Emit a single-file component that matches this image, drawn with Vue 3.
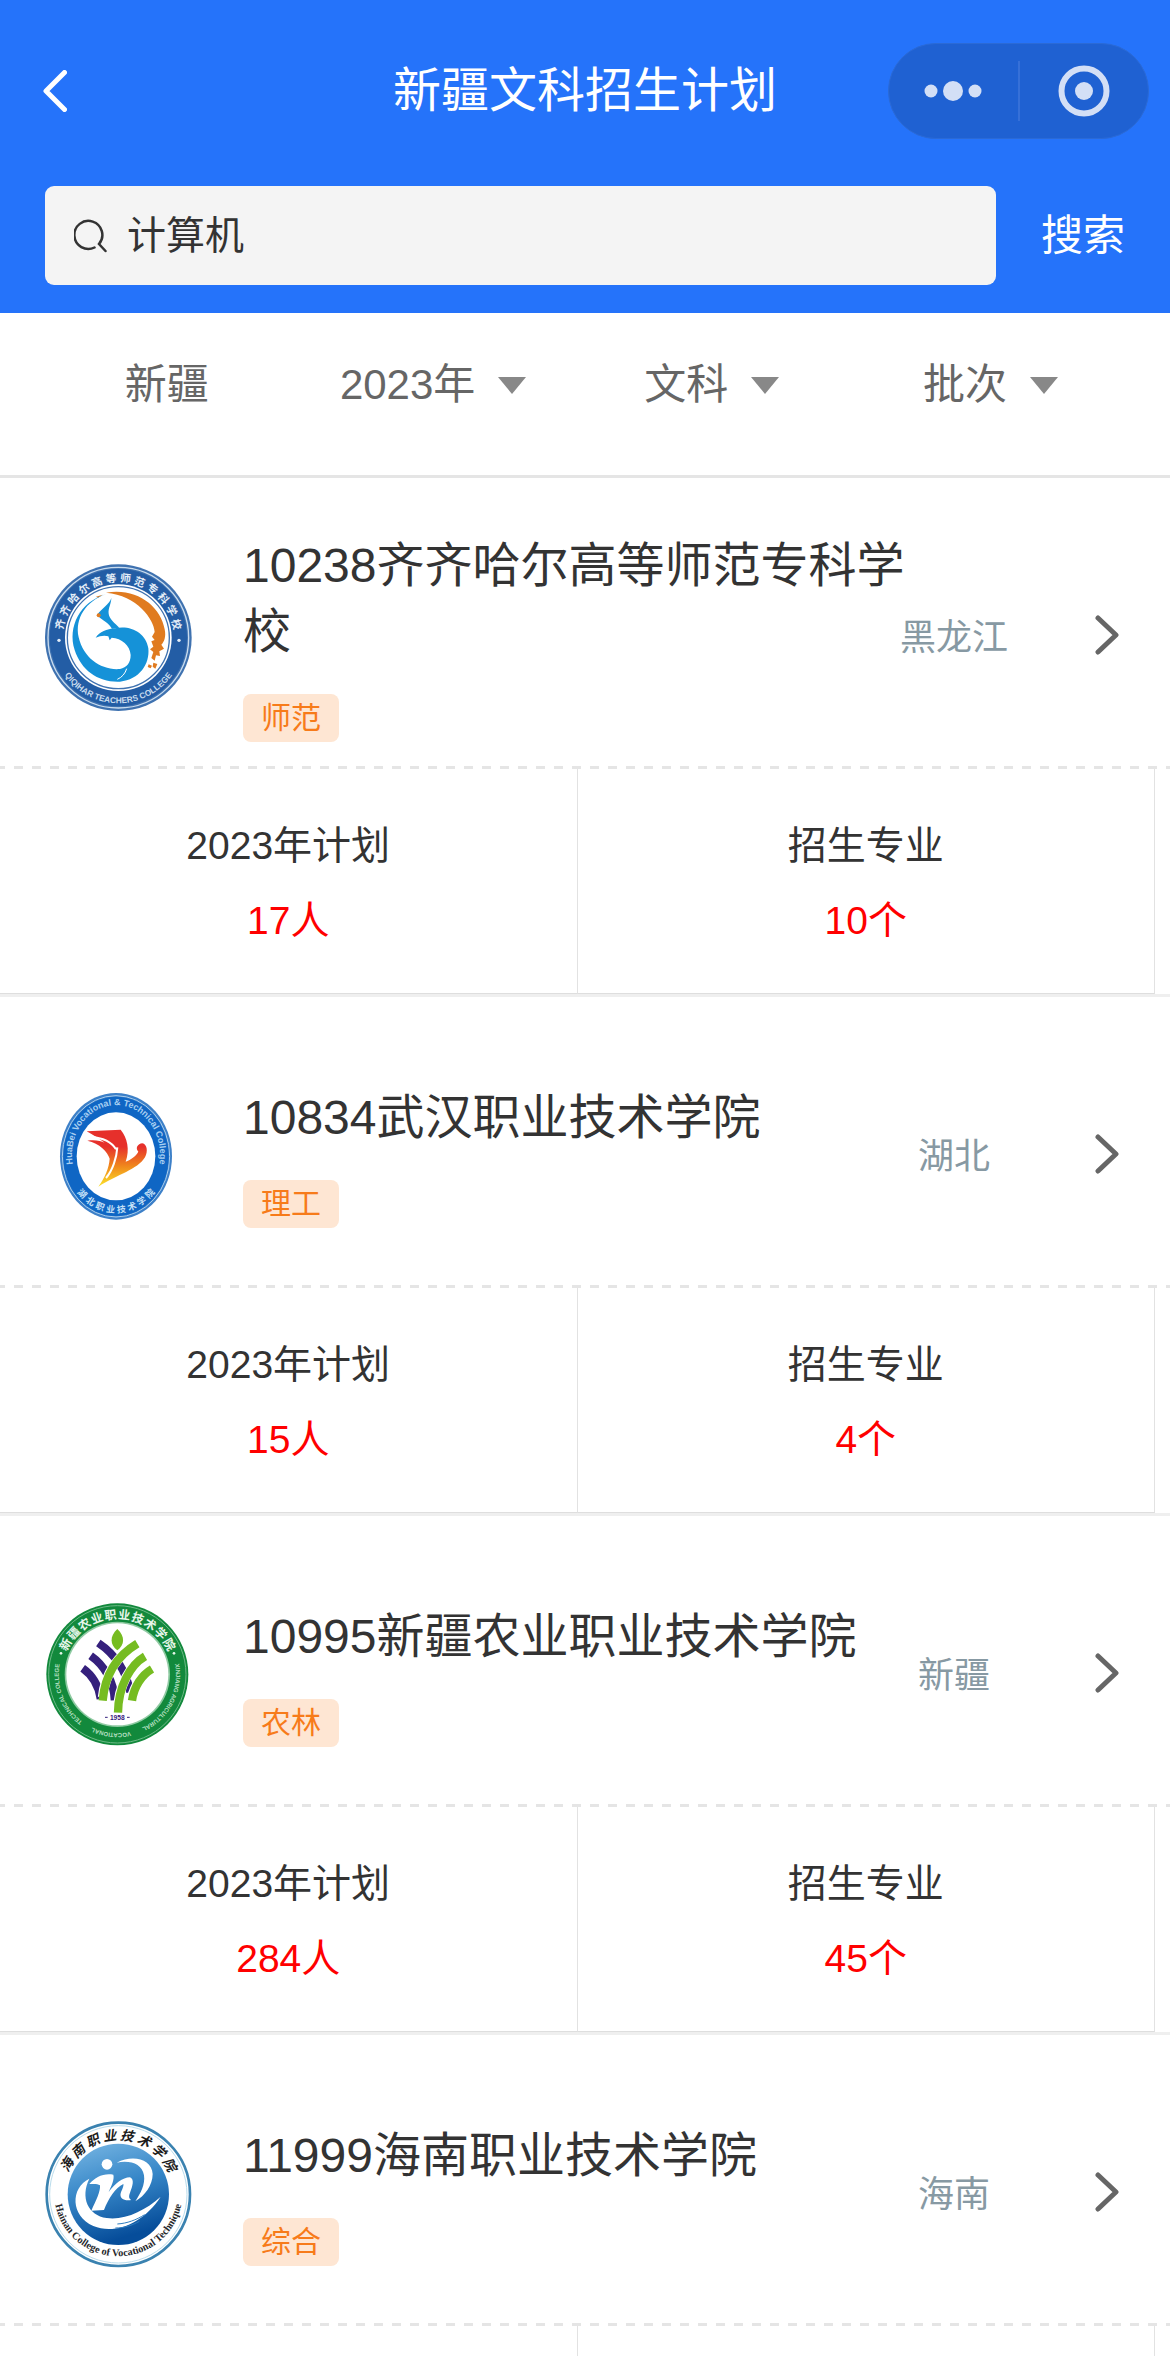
<!--
  招生计划列表页
  顶部导航 + 搜索框 + 筛选栏 + 院校列表
-->
<script setup>
import { ref } from 'vue'

const keyword = ref('计算机')

// 筛选项
const filters = ref([
  { key: 'year', label: '年份', value: '2023年', options: ['2023年'] },
  { key: 'subject', label: '科类', value: '文科', options: ['文科'] },
  { key: 'batch', label: '录取批次', value: '批次', options: ['批次'] }
])

const schools = [
  {
    code: '10238', name: '齐齐哈尔高等师范专科学校', tag: '师范', area: '黑龙江', logo: 'qiqihar',
    stats: [{ label: '2023年计划', value: '17人' }, { label: '招生专业', value: '10个' }]
  },
  {
    code: '10834', name: '武汉职业技术学院', tag: '理工', area: '湖北', logo: 'wuhan',
    stats: [{ label: '2023年计划', value: '15人' }, { label: '招生专业', value: '4个' }]
  },
  {
    code: '10995', name: '新疆农业职业技术学院', tag: '农林', area: '新疆', logo: 'xinjiang',
    stats: [{ label: '2023年计划', value: '284人' }, { label: '招生专业', value: '45个' }]
  },
  { code: '11999', name: '海南职业技术学院', tag: '综合', area: '海南', logo: 'hainan', stats: [{}, {}] }
]

/**
 * 校徽环形文字：把每个字均匀放到圆弧上
 * 角度以 12 点钟方向为 0，顺时针为正；flip 用于下半圈正向文字
 */
function arcChars(text, cx, cy, rx, ry, from, to, flip = false) {
  const chars = [...text]
  return chars.map((ch, i) => {
    const deg = from + ((to - from) * i) / (chars.length - 1)
    const rad = (deg * Math.PI) / 180
    const x = cx + rx * Math.sin(rad)
    const y = cy - ry * Math.cos(rad)
    return { ch, transform: `translate(${x} ${y}) rotate(${flip ? deg - 180 : deg})` }
  })
}

const qiqiharRing = arcChars('齐齐哈尔高等师范专科学校', 265, 263, 181, 181, -77, 77)
const wuhanRing = arcChars('湖北职业技术学院', 258, 260, 140, 158, 226, 134, true)
const xinjiangRing = arcChars('新疆农业职业技术学院', 262, 253, 183, 183, -60, 60)
const hainanRing = arcChars('海南职业技术学院', 265, 283, 180, 180, -60, 60)
</script>

<template>
  <div class="page">
    <header class="header">
      <div class="nav">
        <button class="nav-back" type="button" aria-label="返回">
          <svg viewBox="0 0 24 42" class="back-icon">
            <path d="M21.500 2.500 3 21l18.500 18.500" />
          </svg>
        </button>
        <h1 class="nav-title">新疆文科招生计划</h1>
        <div class="capsule">
          <button class="capsule-btn" type="button" aria-label="更多">
            <svg viewBox="0 0 58 22" class="dots-icon">
              <circle cx="7" cy="11" r="6.500" />
              <circle cx="29" cy="11" r="10" />
              <circle cx="51" cy="11" r="6.500" />
            </svg>
          </button>
          <button class="capsule-btn" type="button" aria-label="关闭">
            <svg viewBox="0 0 52 52" class="target-icon">
              <circle cx="26" cy="26" r="22.500" class="target-ring" />
              <circle cx="26" cy="26" r="9" />
            </svg>
          </button>
        </div>
      </div>
      <form class="search" @submit.prevent>
        <label class="search-box">
          <svg viewBox="0 0 34 34" class="search-icon">
            <path d="M20.500 28.500A14 14 0 1 1 25 25L31.500 32" />
          </svg>
          <input v-model="keyword" class="search-input" type="text" aria-label="搜索专业" />
        </label>
        <button class="search-btn" type="submit">搜索</button>
      </form>
    </header>

    <div class="filters">
      <div class="filter">新疆</div>
      <label v-for="f in filters" :key="f.key" class="filter">
        <select v-model="f.value" class="filter-select" :aria-label="f.label">
          <option v-for="o in f.options" :key="o">{{ o }}</option>
        </select>
        <svg viewBox="0 0 28 17" class="filter-arrow"><path d="M0 0h28L14 17z" /></svg>
      </label>
    </div>

    <main class="list">
      <article v-for="s in schools" :key="s.code" class="school">
        <div class="school-head">
          <!-- 齐齐哈尔高等师范专科学校 -->
          <svg v-if="s.logo === 'qiqihar'" class="logo" viewBox="45 42 441 441">
            <defs>
              <path id="qq-bottom" d="M90 352A196 196 0 0 0 440 352" />
            </defs>
            <circle cx="265" cy="263" r="220" fill="#3f72b0" />
            <circle cx="265" cy="263" r="211" fill="none" stroke="#c9dcee" stroke-width="4" />
            <circle cx="265" cy="263" r="206" fill="#235da5" />
            <circle cx="265" cy="263" r="160" fill="#fff" />
            <circle cx="265" cy="263" r="153" fill="none" stroke="#3f72b0" stroke-width="4" />
            <g class="ring-cn" fill="#e4eef8" font-size="32">
              <text v-for="(c, i) in qiqiharRing" :key="i" :transform="c.transform">{{ c.ch }}</text>
            </g>
            <circle cx="87" cy="271" r="5" fill="#e4eef8" />
            <circle cx="447" cy="271" r="5" fill="#e4eef8" />
            <text class="ring-en" fill="#c9dcee" font-size="25">
              <textPath href="#qq-bottom" startOffset="50%" text-anchor="middle">QIQIHAR TEACHERS COLLEGE</textPath>
            </text>
            <path
              fill="#e07b20"
              d="M228 128C320 112 392 168 404 238c5 22-2 40-10 46l8 12-14 8 2 14-12-2-4 16-10-8 6-18-10-8 10-8-6-16 10-4-8-10 8-14C372 208 322 136 228 128z"
            />
            <path fill="#e07b20" d="M356 343l10 4-4 8-9-4zM370 338l12 4-6 14-8-6zM198 140l20-6-14 9z" />
            <path
              fill="#1592d8"
              d="M228 132C150 156 112 230 134 300c20 62 72 98 136 95 58-6 90-52 85-100-7-46-52-70-100-60-25 2-46 11-58 28 12-5 26-8 38-4l4 12 6-8c30 2 55 22 57 52 0 24-12 38-32 42C215 362 160 325 146 262c-12-58 22-108 82-130z"
            />
            <path
              fill="#1592d8"
              d="M244 144c-6 20-30 32-42 50 6 14 30 18 44 42l22-3c-14-14-30-26-32-42-2-16 8-30 8-47z"
            />
            <circle cx="206" cy="196" r="6" fill="#e07b20" />
            <path fill="none" stroke="#fff" stroke-width="3" d="M262 388c14-6 24-18 28-32" />
          </svg>

          <!-- 武汉职业技术学院 -->
          <svg v-else-if="s.logo === 'wuhan'" class="logo" viewBox="45 39 441 441">
            <defs>
              <path id="wh-top" d="M130 292A132 150 0 1 1 386 292" />
              <linearGradient id="wh-flame" x1="0" y1="0" x2="0" y2="1">
                <stop offset="0.300" stop-color="#e6302b" />
                <stop offset="0.650" stop-color="#f08a1c" />
                <stop offset="1" stop-color="#fbe22a" />
              </linearGradient>
            </defs>
            <ellipse cx="258" cy="259" rx="168" ry="190" fill="#3d80c8" />
            <ellipse cx="258" cy="259" rx="161" ry="182" fill="none" stroke="#a9cdec" stroke-width="3" />
            <ellipse cx="258" cy="259" rx="158" ry="179" fill="#0f66c4" />
            <ellipse cx="258" cy="259" rx="118" ry="132" fill="#fff" />
            <text class="ring-en" fill="#a9d0f2" font-size="27">
              <textPath href="#wh-top" startOffset="50%" text-anchor="middle">HuaBei Vocational &amp; Technical College</textPath>
            </text>
            <g class="ring-cn" fill="#c4e0f7" font-size="27">
              <text v-for="(c, i) in wuhanRing" :key="i" :transform="c.transform">{{ c.ch }}</text>
            </g>
            <path
              fill="url(#wh-flame)"
              d="M170 184l102-5c20 24 28 60 15 96 16-6 32-18 38-30-10-10-2-24 12-25 14 2 18 24 8 42-24 38-80 50-140 88 20-28 32-56 34-84-6-20-30-46-67-54 22-3 40 0 52 6-18-14-34-22-54-34z"
            />
            <path fill="none" stroke="#fff" stroke-width="6" d="M180 200c50 4 68 20 78 38M262 232c-2 30-14 70-34 92" />
          </svg>

          <!-- 新疆农业职业技术学院 -->
          <svg v-else-if="s.logo === 'xinjiang'" class="logo" viewBox="45 36 441 441">
            <defs>
              <path id="xj-bottom" d="M434 216A176 176 0 1 1 90 216" />
            </defs>
            <circle cx="262" cy="253" r="213" fill="#12893c" />
            <circle cx="262" cy="253" r="206" fill="none" stroke="#6cba86" stroke-width="3" />
            <circle cx="262" cy="253" r="158" fill="#8fcaa2" />
            <circle cx="262" cy="253" r="153" fill="#fff" />
            <g class="ring-cn" fill="#e6f6ea" font-size="36">
              <text v-for="(c, i) in xinjiangRing" :key="i" :transform="c.transform">{{ c.ch }}</text>
            </g>
            <circle cx="93" cy="190" r="4" fill="#e6f6ea" />
            <circle cx="432" cy="190" r="4" fill="#e6f6ea" />
            <!-- 英文校名分三段排在同一条弧线上 -->
            <g class="ring-en" fill="#b7e0c3" font-size="18">
              <text><textPath href="#xj-bottom" startOffset="1%">XINJIANG AGRICULTURAL</textPath></text>
              <text><textPath href="#xj-bottom" startOffset="53%" text-anchor="middle">VOCATIONAL</textPath></text>
              <text><textPath href="#xj-bottom" startOffset="99%" text-anchor="end">TECHNICAL COLLEGE</textPath></text>
            </g>
            <g fill="none" stroke="#35207c" stroke-width="24">
              <path d="M205 159c42 28 82 76 96 148" />
              <path d="M182 197c40 28 70 76 72 134" />
              <path d="M158 235c28 20 48 50 54 92" />
            </g>
            <g fill="none" stroke="#fff" stroke-width="29">
              <path d="M322 161C265 195 225 250 218 322" />
              <path d="M345 199C300 225 265 290 264 358" />
              <path d="M366 237C335 255 312 290 306 322" />
            </g>
            <g fill="none" stroke="#76bc21" stroke-width="25">
              <path d="M322 161C265 195 225 250 218 332" />
              <path d="M345 199C300 225 265 290 264 368" />
              <path d="M366 237C335 255 312 290 306 332" />
            </g>
            <path fill="#76bc21" d="M262 117c24 22 22 48 0 64-22-16-24-42 0-64z" />
            <path stroke="#35207c" stroke-width="3" d="M225 382h8M291 382h8" />
            <text class="ring-en" x="262" y="389" fill="#35207c" font-size="20" text-anchor="middle">1958</text>
          </svg>

          <!-- 海南职业技术学院 -->
          <svg v-else class="logo" viewBox="45 63 441 441">
            <defs>
              <path id="hn-bottom" d="M72 276A193 193 0 0 0 458 276" />
              <linearGradient id="hn-disc" x1="0" y1="0" x2="0.300" y2="1">
                <stop offset="0" stop-color="#7ab8e4" />
                <stop offset="0.500" stop-color="#3787c8" />
                <stop offset="1" stop-color="#064d9a" />
              </linearGradient>
            </defs>
            <circle cx="265" cy="283" r="215" fill="#fff" stroke="#3a82b0" stroke-width="8" />
            <circle cx="265" cy="283" r="206" fill="none" stroke="#b9dcec" stroke-width="3" />
            <circle cx="265" cy="283" r="152" fill="url(#hn-disc)" />
            <g class="ring-brush" fill="#1b1b1b" font-size="40">
              <text v-for="(c, i) in hainanRing" :key="i" :transform="c.transform">{{ c.ch }}</text>
            </g>
            <text class="ring-serif" fill="#26282c" font-size="31">
              <textPath href="#hn-bottom" startOffset="50%" text-anchor="middle">Hainan College of Vocational Technique</textPath>
            </text>
            <g fill="#fff">
              <circle cx="231" cy="193" r="16" />
              <path d="M178 252c16-20 44-34 72-28 4 14-6 34-14 52 18-24 42-44 64-44 14 6 8 26 0 46-4 10-4 18 4 22-20 4-36-4-32-20 4-12 10-22 8-28-24 12-44 42-58 78l-38 2c14-30 28-58 26-76-8-6-20-4-32-4z" />
              <path d="M260 188c50-26 106-10 108 34 0 34-24 66-52 82 16-24 30-50 26-78-6-34-40-46-82-38z" />
              <path d="M178 236c-58 28-56 112 12 142 66 28 152-10 202-88-46 42-110 72-162 64-56-8-80-62-52-118z" />
            </g>
            <path fill="none" stroke="#2c7cc0" stroke-width="3" d="M262 372c30-2 56-12 82-28M256 384c28 0 50-8 72-20" />
          </svg>

          <div class="info">
            <h2 class="name">{{ s.code }}{{ s.name }}</h2>
            <span class="tag">{{ s.tag }}</span>
          </div>
          <span class="area">{{ s.area }}</span>
          <a class="more" href="#" :aria-label="s.name">
            <svg viewBox="0 0 24 40" class="more-icon">
              <path d="M3 3l18 17L3 37" />
            </svg>
          </a>
        </div>
        <div class="stats">
          <div v-for="(st, i) in s.stats" :key="i" class="stat">
            <template v-if="st.label">
              <div class="stat-label">{{ st.label }}</div>
              <div class="stat-value">{{ st.value }}</div>
            </template>
          </div>
        </div>
      </article>
    </main>
  </div>
</template>

<style>
body {
  margin: 0;
  background: #fff;
}
</style>

<style scoped>
.page {
  display: flex;
  flex-direction: column;
  height: 100vh;
  overflow: hidden;
  color: #333;
  font-family: "Liberation Sans", "Noto Sans CJK SC", sans-serif;
}

button,
input,
select {
  margin: 0;
  padding: 0;
  border: 0;
  outline: 0;
  background: none;
  color: inherit;
  font: inherit;
}

svg {
  display: block;
  flex: none;
}

/* 顶部 */
.header {
  flex: none;
  padding: 43px 0 28px;
  background: #2573fa;
  color: #fff;
}

.nav {
  display: grid;
  grid-template-columns: 1fr auto 1fr;
  align-items: center;
  padding: 0 21px;
}

.nav-back {
  justify-self: start;
  padding: 20px 22px;
}

.back-icon {
  width: 24px;
  height: 42px;
  fill: none;
  stroke: #fff;
  stroke-width: 5;
  stroke-linecap: round;
  stroke-linejoin: round;
}

.nav-title {
  margin: 0;
  font-size: 48px;
  font-weight: 400;
  line-height: 66px;
}

.capsule {
  display: flex;
  justify-self: end;
  align-items: center;
  box-sizing: border-box;
  width: 261px;
  height: 96px;
  border: 1px solid #2b6ad6;
  border-radius: 48px;
  background: #1f61d2;
}

.capsule-btn {
  display: flex;
  flex: 1;
  align-items: center;
  justify-content: center;
  height: 60px;
}

.capsule-btn + .capsule-btn {
  border-left: 2px solid #3670d8;
}

.dots-icon {
  width: 58px;
  height: 22px;
  fill: #d3dff6;
}

.target-icon {
  width: 52px;
  height: 52px;
  fill: #d3dff6;
}

.target-ring {
  fill: none;
  stroke: #d3dff6;
  stroke-width: 6;
}

.search {
  display: flex;
  align-items: center;
  gap: 45px;
  margin-top: 47px;
  padding: 0 45px;
}

.search-box {
  display: flex;
  flex: 1;
  align-items: center;
  gap: 19px;
  height: 99px;
  padding: 0 29px;
  border-radius: 9px;
  background: #f4f4f4;
  color: #333;
}

.search-icon {
  width: 34px;
  height: 34px;
  fill: none;
  stroke: #333;
  stroke-width: 2.5;
  stroke-linecap: round;
}

.search-input {
  flex: 1;
  min-width: 0;
  height: 60px;
  padding-bottom: 8px;
  font-size: 39px;
}

.search-btn {
  font-size: 42px;
  line-height: 60px;
}

/* 筛选栏 */
.filters {
  display: grid;
  flex: none;
  grid-template-columns: 10fr 11fr 11fr 11fr;
  height: 144px;
  padding: 0 40px 18px;
  border-bottom: 3px solid #e5e5e5;
  color: #666;
  font-size: 42px;
  line-height: 60px;
}

.filter {
  display: flex;
  align-items: center;
  justify-content: center;
  gap: 22px;
}

.filter-select {
  appearance: none;
  line-height: 60px;
}

.filter-arrow {
  width: 28px;
  height: 17px;
  fill: #888;
}

/* 院校列表 */
.list {
  flex: 1;
  min-height: 0;
  overflow-y: auto;
  scrollbar-width: none;
}

.school {
  border-bottom: 3px solid #efefef;
}

.school-head {
  display: flex;
  align-items: center;
  box-sizing: border-box;
  min-height: 288px;
  padding: 45px 51px 14px 45px;
}

.logo {
  width: 147px;
  height: 147px;
}

.ring-cn {
  font-family: "Noto Sans CJK SC", sans-serif;
  font-weight: 700;
  text-anchor: middle;
  dominant-baseline: central;
}

.ring-brush {
  font-family: "Noto Sans CJK SC", sans-serif;
  font-style: italic;
  font-weight: 700;
  text-anchor: middle;
  dominant-baseline: central;
}

.ring-en {
  font-family: "Liberation Sans", sans-serif;
  font-weight: 700;
}

.ring-serif {
  font-family: "Liberation Serif", serif;
  font-weight: 700;
}

.info {
  flex: 1;
  margin-left: 51px;
}

.name {
  margin: 0 0 29px;
  font-size: 48px;
  font-weight: 400;
  line-height: 66px;
}

.tag {
  display: block;
  width: fit-content;
  padding: 0 18px;
  border-radius: 8px;
  background: #fee6d3;
  color: #f77b1a;
  font-size: 30px;
  line-height: 48px;
}

.area {
  display: flex;
  justify-content: center;
  width: 96px;
  color: #8799a3;
  font-size: 36px;
  line-height: 48px;
  white-space: nowrap;
}

.more {
  margin-left: 93px;
  padding-bottom: 6px;
}

.more-icon {
  width: 24px;
  height: 40px;
  fill: none;
  stroke: #666;
  stroke-width: 5;
  stroke-linecap: round;
  stroke-linejoin: round;
}

/* 计划人数、招生专业，顶部为 9px 间隔的虚线 */
.stats {
  display: flex;
  padding: 3px 15px 0 0;
  background: repeating-linear-gradient(90deg, #e5e5e5 0 5px, transparent 5px 14px, #e5e5e5 14px 18px) top / 100% 3px no-repeat;
}

.stat {
  flex: 1;
  box-sizing: border-box;
  min-height: 225px;
  padding: 39px 0 35px;
  border-right: 1px solid #e2e2e2;
  border-bottom: 1px solid #dedede;
  font-size: 39px;
  line-height: 75px;
  text-align: center;
}

.stat-value {
  color: #f00;
}
</style>
